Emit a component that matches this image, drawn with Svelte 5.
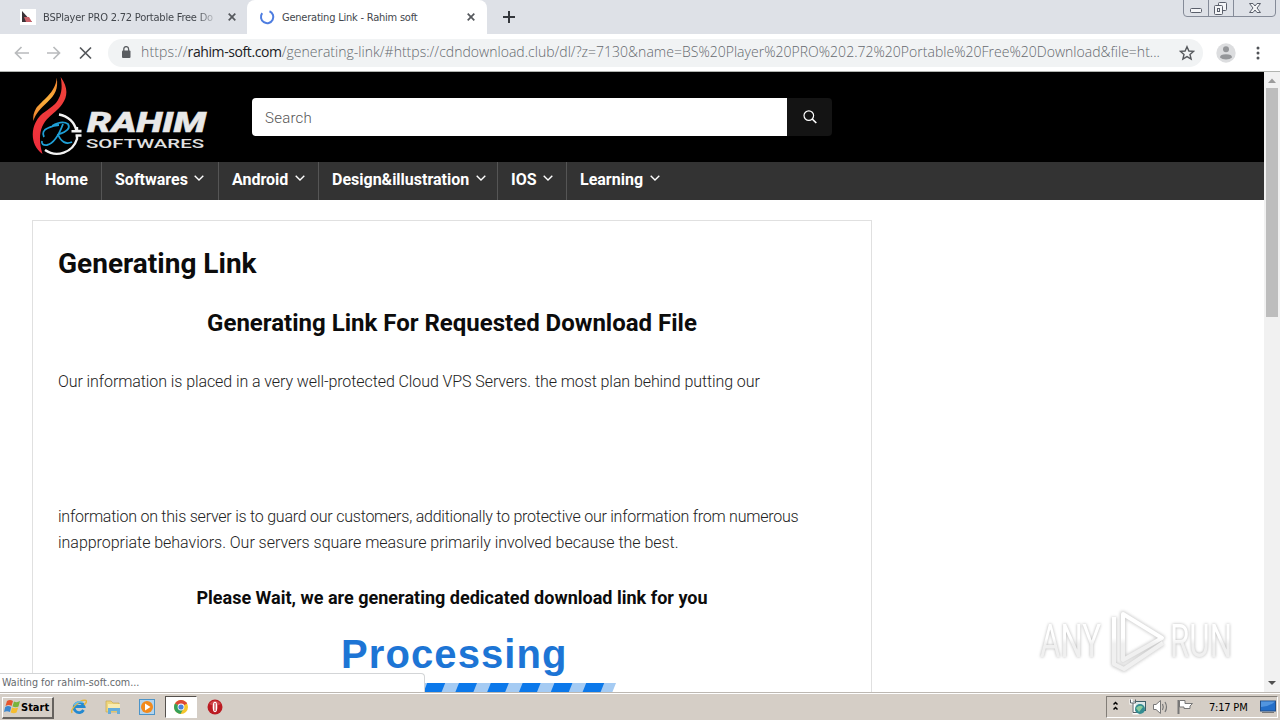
<script lang="ts">
  type NavItem = { label: string; width: number; menu: boolean };

  const nav: NavItem[] = [
    { label: 'Home', width: 70, menu: false },
    { label: 'Softwares', width: 117, menu: true },
    { label: 'Android', width: 100, menu: true },
    { label: 'Design&illustration', width: 179, menu: true },
    { label: 'IOS', width: 69, menu: true },
    { label: 'Learning', width: 110, menu: true },
  ];

  const stripes = [0, 1, 2, 3, 4, 5, 6, 7, 8, 9];

  let query = $state('');
</script>

<div class="screen">
  <div class="tabstrip">
    <div class="tab">
      <svg class="favicon" width="16" height="16" viewBox="0 0 16 16">
        <rect width="16" height="16" fill="#fff" />
        <path d="M2 2 L12 13 H2 Z" fill="#3b3337" />
        <path d="M4 8 L9 8 L12 13 H6 Z" fill="#c9626a" />
      </svg>
      <span class="title faded">BSPlayer PRO 2.72 Portable Free Do</span>
      <svg class="close" width="8" height="8" viewBox="0 0 8 8"><path d="M.7 .7 L7.3 7.3 M7.3 .7 L.7 7.3" /></svg>
    </div>
    <div class="tab active">
      <svg class="favicon" width="16" height="16" viewBox="0 0 16 16">
        <path d="M10.5 2.2 A6.2 6.2 0 1 1 3.2 4.2" fill="none" stroke="#4e7de0" stroke-width="2" />
      </svg>
      <span class="title">Generating Link - Rahim soft</span>
      <svg class="close" width="8" height="8" viewBox="0 0 8 8"><path d="M.7 .7 L7.3 7.3 M7.3 .7 L.7 7.3" /></svg>
    </div>
    <svg class="plus" width="12" height="12" viewBox="0 0 12 12"><path d="M6 0 V12 M0 6 H12" stroke="#34373c" stroke-width="2" /></svg>
    <svg class="window-buttons" width="94" height="17" viewBox="0 0 94 17">
      <g fill="none" stroke="#858b98">
        <path d="M.5 0 V13 Q.5 16.5 4 16.5 H89 Q92.500 16.500 92.500 13 V0 M25.500 0 V16 M50.500 0 V16" />
        <g stroke="#5a5f6b" fill="#f4f5f7">
          <rect x="7.500" y="8.500" width="11" height="4" rx="1" />
          <rect x="35.500" y="2.500" width="8" height="8" rx="1" />
          <rect x="31.500" y="5.500" width="8" height="9" rx="1" />
          <rect x="34.500" y="8.500" width="2" height="3" />
          <path d="M66.500 3.500 H70 L72 6 L74 3.500 H77.500 L74 8 L77.500 12.500 H74 L72 10 L70 12.500 H66.500 L70 8 Z" />
        </g>
      </g>
    </svg>
  </div>

  <div class="toolbar">
    <svg class="nav-icons" width="80" height="14" viewBox="0 0 80 14" fill="none" stroke-width="1.700">
      <path d="M15 7 H2 M7.500 1 L1.500 7 L7.500 13" stroke="#b9bbbd" />
      <path d="M33 7 H45 M39.500 1 L45.500 7 L39.500 13" stroke="#b9bbbd" />
      <path d="M66 1.500 L77 12.500 M77 1.500 L66 12.500" stroke="#55585c" />
    </svg>
    <div class="omnibox">
      <svg width="10" height="13" viewBox="0 0 10 13">
        <rect x="1" y="4.500" width="8.500" height="7.500" rx="1" fill="#5a5d61" />
        <path d="M2.800 5 V3 a2.400 2.400 0 0 1 4.800 0 V5" fill="none" stroke="#5a5d61" stroke-width="1.300" />
      </svg>
      <span class="url"><span class="scheme">https://</span><span class="host">rahim-soft.com</span><span class="path">/generating-link/#https://cdndownload.club/dl/?z=7130&amp;name=BS%20Player%20PRO%202.72%20Portable%20Free%20Download&amp;file=ht...</span></span>
      <svg width="16" height="16" viewBox="0 0 16 16">
        <path d="M8 1.700 L9.900 6 L14.500 6.400 L11 9.500 L12.100 14 L8 11.600 L3.900 14 L5 9.500 L1.500 6.400 L6.100 6 Z" fill="none" stroke="#55585c" stroke-width="1.400" />
      </svg>
    </div>
    <svg class="avatar" width="20" height="20" viewBox="0 0 20 20">
      <circle cx="10" cy="10" r="9.700" fill="#dcdddf" />
      <circle cx="10" cy="6.200" r="3" fill="#949699" />
      <path d="M4 14.500 Q4 11.200 10 11.200 T16 14.500 Q14 16.600 10 16.600 T4 14.500" fill="#949699" />
    </svg>
    <svg class="dots" width="4" height="14" viewBox="0 0 4 14" fill="#505357">
      <circle cx="2" cy="2" r="1.500" /><circle cx="2" cy="7" r="1.500" /><circle cx="2" cy="12" r="1.500" />
    </svg>
  </div>

  <div class="viewport">
    <div class="site">
      <header>
        <svg class="logo" width="180" height="84" viewBox="0 0 180 84">
          <defs>
            <linearGradient id="flame" x1="0" y1="0" x2="0" y2="1">
              <stop offset="0" stop-color="#f0453a" /><stop offset="1" stop-color="#ee2b3c" />
            </linearGradient>
            <linearGradient id="gold" x1="0" y1="0" x2="0" y2="1">
              <stop offset="0" stop-color="#ef7a2c" /><stop offset=".5" stop-color="#fbb03b" /><stop offset="1" stop-color="#ef7a2c" />
            </linearGradient>
          </defs>
          <path d="M27 37.500 A21 21 0 0 1 44.500 54 H49.500 M45 54 V50 M39.500 54.300 H49.500 M43.500 58.500 H49.500 M45 58 V62 A21 21 0 0 1 13 73" fill="none" stroke="#f2f2f2" stroke-width="2.400" />
          <path d="M24.700 .5 C26.500 12 23 18 15.300 25.300 C8 32 3.500 37 1.300 44 C1 39 1.500 36 4 31.500 C9 24 24 16 24.700 .5 Z" fill="url(#gold)" />
          <path d="M28.700 0 C36 10 36 19 30.300 27 C26 33 20 37 17 40.300 C8 48 5.500 61 10.500 77 C-1 69 -1 54 3.700 45.300 C9 35 16 34 23 27 C29 20 31 12 28.700 0 Z" fill="url(#flame)" />
          <path d="M20 49 Q30 43 36 47 Q40 53 26 57.500 Q31 69 40 65 M31 47 Q24 66 15 68 Q9 68.500 10 64 M12 60 Q9 54 16 51 Q22 48 27 48" fill="none" stroke="#1e9fd6" stroke-width="1.800" />
          <text class="brand" x="55" y="55.300" textLength="119" lengthAdjust="spacingAndGlyphs">RAHIM</text>
          <text class="brand-sub" x="54" y="71" textLength="118" lengthAdjust="spacingAndGlyphs">SOFTWARES</text>
        </svg>
        <form class="search" onsubmit={(e) => e.preventDefault()}>
          <input type="text" placeholder="Search" bind:value={query} />
          <button type="submit" aria-label="Search">
            <svg width="14" height="14" viewBox="0 0 14 14" fill="none" stroke="#fff">
              <circle cx="5.800" cy="5.600" r="4.800" stroke-width="1.200" /><path d="M9.200 9 L13.300 13" stroke-width="1.700" />
            </svg>
          </button>
        </form>
      </header>

      <nav>
        {#each nav as item}
          <div class="nav-item" style="width: {item.width}px">
            <span>{item.label}</span>
            {#if item.menu}
              <svg width="10" height="6" viewBox="0 0 10 6"><path d="M.7 .7 L5 4.900 L9.300 .7" fill="none" stroke="#fff" stroke-width="1.400" /></svg>
            {/if}
          </div>
        {/each}
      </nav>

      <main>
        <h1>Generating Link</h1>
        <h2>Generating Link For Requested Download File</h2>
        <p class="first">Our information is placed in a very well-protected Cloud VPS Servers. the most plan behind putting our</p>
        <p class="second">information on this server is to guard our customers, additionally to protective our information from numerous</p>
        <p class="third">inappropriate behaviors. Our servers square measure primarily involved because the best.</p>
        <h3>Please Wait, we are generating dedicated download link for you</h3>
        <div class="processing">Processing</div>
        <svg class="progress" width="330" height="20" viewBox="0 0 330 20">
          <path d="M6 0 H330 L322 20 H0 Z" fill="#a5cbf3" />
          {#each stripes as i}
            <path d="M{14 + i * 31.8} 0 h18 l-8 20 h-18 Z" fill="#0b78ea" />
          {/each}
        </svg>
      </main>
    </div>

    <div class="scrollbar">
      <svg width="16" height="16" viewBox="0 0 16 16"><path d="M4 11 L8 6.500 L12 11 Z" fill="#9c9c9c" /></svg>
      <div class="thumb"></div>
      <svg class="down" width="16" height="16" viewBox="0 0 16 16"><path d="M4 5 H12 L8 9 Z" fill="#505050" /></svg>
    </div>

    <div class="status">Waiting for rahim-soft.com...</div>

    <svg class="watermark" width="210" height="76" viewBox="0 0 210 76">
      <defs>
        <linearGradient id="frost" gradientUnits="userSpaceOnUse" x1="0" y1="34" x2="0" y2="40">
          <stop offset="0" stop-color="#fff" /><stop offset="1" stop-color="#f0f0f0" />
        </linearGradient>
      </defs>
      <path class="mark-shadow" d="M91 10 L130 34 L91 56 Z M82 13 V60 L92 65 L131 39" />
      <path class="mark" d="M91 10 L130 34 L91 56 Z M82 13 V60 L92 65 L131 39" />
      <text x="8" y="53" textLength="61" lengthAdjust="spacingAndGlyphs">ANY</text>
      <text x="138" y="53" textLength="62" lengthAdjust="spacingAndGlyphs">RUN</text>
    </svg>
  </div>

  <footer class="taskbar">
    <button class="start">
      <svg width="17" height="16" viewBox="0 0 17 16">
        <path d="M3 2 Q6 0 9 2 L7.500 7 Q5 5 1.500 7 Z" fill="#e6552e" />
        <path d="M10 2.500 Q13 4 16 2 L14.500 7.500 Q12 9 8.500 7.500 Z" fill="#79b43c" />
        <path d="M1.200 8 Q4 6 7.200 8 L6 13 Q3 11.500 0 13 Z" fill="#3c87cf" />
        <path d="M8 8.500 Q11 10 14.200 8.500 L12.500 13.500 Q10 15 6.700 13.500 Z" fill="#f6bd2f" />
      </svg>
      Start
    </button>
    <div class="launchers">
      <div class="slot">
        <svg width="16" height="16" viewBox="0 0 16 16">
          <path d="M12.500 11 A5 5 0 1 1 13 7.500 H4.500" fill="none" stroke="#2389d0" stroke-width="2.800" />
          <path d="M1 14 C-1 10 9 0 15 1.500 Q16.500 3 13 6" fill="none" stroke="#e6b63b" stroke-width="1.400" />
          <path d="M3 6 Q7 1 12 3.500" fill="none" stroke="#68bdea" stroke-width="1.500" />
        </svg>
      </div>
      <div class="slot">
        <svg width="16" height="16" viewBox="0 0 16 16">
          <path d="M1 2 H6 L8 4 H14 V13 H1 Z" fill="#eed67d" stroke="#c9aa50" stroke-width=".7" />
          <path d="M3 5 H15 V10 H3 Z" fill="#f8ecb0" />
          <path d="M3 15 V9 H15 V15 H12 V12 H6 V15 Z" fill="#65addb" />
        </svg>
      </div>
      <div class="slot">
        <svg width="16" height="16" viewBox="0 0 16 16">
          <rect x=".5" y=".5" width="15" height="15" fill="#b3d4ed" stroke="#4c94c8" />
          <circle cx="8" cy="8" r="6" fill="#f28a1c" /><path d="M6 4.500 L11.500 8 L6 11.500 Z" fill="#fff" />
        </svg>
      </div>
      <div class="slot pressed">
        <svg width="14" height="14" viewBox="0 0 14 14">
          <circle cx="7" cy="7" r="7" fill="#f5c62d" />
          <path d="M7 7 L1 3.500 A7 7 0 0 1 13 3.500 Z" fill="#dc4937" />
          <path d="M7 7 L1 3.500 A7 7 0 0 0 6.500 14 L9.500 8.500 Z" fill="#36a059" />
          <path d="M7 3.500 H13 L12 2 H4 Z" fill="#dc4937" />
          <circle cx="7" cy="7" r="3.400" fill="#fff" /><circle cx="7" cy="7" r="2.600" fill="#4a82dc" />
        </svg>
      </div>
      <div class="slot">
        <svg width="16" height="16" viewBox="0 0 16 16">
          <circle cx="8" cy="8" r="7.500" fill="#bb1b22" /><path d="M2 5 Q8 -2 14 5 Q8 8 2 5" fill="#dc6467" opacity=".6" />
          <ellipse cx="8" cy="8" rx="2.300" ry="5.200" fill="#fff" /><path d="M8 4 V12" stroke="#c63a40" stroke-width="1.200" />
        </svg>
      </div>
    </div>
    <div class="tray">
      <svg width="80" height="18" viewBox="0 0 80 18">
        <path d="M.5 6.500 L2.500 4.500 L4.500 6.500 M.5 11.500 L2.500 9.500 L4.500 11.500" fill="none" stroke="#000" stroke-width="1.500" />
        <rect x="20.500" y="3.500" width="12" height="9" fill="#dce8e8" stroke="#3e5f69" />
        <path d="M18 1 V5 H21 V15 H26" fill="none" stroke="#fff" stroke-width="3" />
        <path d="M17.500 1.500 V5 H22.500 V1.500 M20 5 V14.500 H25" fill="none" stroke="#5b6267" />
        <circle cx="27" cy="11" r="5" fill="#338c91" /><path d="M23 10 Q27 6 30 9 L26 14 Z" fill="#8ccb9c" />
        <path d="M40.500 6.500 H43 L47.500 2.500 V15.500 L43 11.500 H40.500 Z" fill="#fff" stroke="#777" />
        <path d="M49.500 6 Q51 9 49.500 12 M52 4 Q55 9 52 14" fill="none" stroke="#777" stroke-width="1.200" />
        <path d="M65.500 2 V16" stroke="#777" stroke-width="2" />
        <path d="M66.500 2.500 H72 V5.500 H79.500 L77 8 V10.500 H71 V9 H66.500 Z" fill="#fff" stroke="#777" />
      </svg>
      <span class="clock">7:17 PM</span>
      <svg width="16" height="14" viewBox="0 0 16 14">
        <rect x=".5" y="1" width="15" height="10" fill="#246fc9" stroke="#234e86" /><path d="M1 7 Q9 7 15 1.500 V1.500 H1 Z" fill="#5295df" />
        <path d="M2 12.500 H14" stroke="#777" />
      </svg>
    </div>
  </footer>
</div>

<style>
  :global(body) {
    overflow: hidden;
  }

  .screen {
    width: 1280px;
    height: 720px;
    display: flex;
    flex-direction: column;
    overflow: hidden;
    background: #fff;
    color: #0c0c0c;
    font-family: Roboto, sans-serif;
  }

  svg {
    display: block;
    flex: none;
  }

  .tabstrip {
    height: 34px;
    flex: none;
    display: flex;
    background: #dee1e7;
  }

  .tab {
    width: 240px;
    box-sizing: border-box;
    display: flex;
    align-items: center;
    padding: 0 12px 0 12px;
    font: 11px 'DejaVu Sans Condensed', 'DejaVu Sans', sans-serif;
    color: #43474d;
  }

  .tab:first-child {
    width: 247px;
    padding-left: 20px;
    padding-right: 11px;
  }

  .tab.active {
    background: #fff;
    border-radius: 8px 8px 0 0;
  }

  .title {
    width: 175px;
    margin-left: 7px;
    white-space: nowrap;
    overflow: hidden;
    letter-spacing: -0.22px;
  }

  .tab.active .title {
    width: 180px;
  }

  .faded {
    mask-image: linear-gradient(90deg, #000 88%, transparent);
  }

  .close {
    margin-left: auto;
    margin-right: 0;
    fill: none;
    stroke: #55585d;
    stroke-width: 1.700;
  }

  .plus {
    margin: 11px 0 0 16px;
  }

  .window-buttons {
    margin-left: auto;
    margin-right: 3px;
  }

  .toolbar {
    height: 38px;
    box-sizing: border-box;
    flex: none;
    display: flex;
    align-items: center;
    padding: 0 20px 0 14px;
    border-bottom: 1px solid #b1b4b0;
  }

  .omnibox {
    width: 1095px;
    height: 28px;
    box-sizing: border-box;
    margin-left: 14px;
    padding: 0 8px 0 13px;
    display: flex;
    align-items: center;
    border-radius: 14px;
    background: #f1f3f4;
  }

  .url {
    flex: 1;
    margin-left: 10px;
    display: flex;
    white-space: nowrap;
    font: 300 14px/18px 'Open Sans', sans-serif;
    margin-top: -2px;
    color: #65696e;
  }

  .scheme {
    letter-spacing: 0.15px;
  }

  .host {
    color: #202124;
    font-weight: 400;
    letter-spacing: -0.4px;
  }

  .path {
    letter-spacing: 0.02px;
  }

  .avatar {
    margin: 0 20px 0 13px;
  }

  .dots {
    margin-top: 1px;
  }

  .viewport {
    position: relative;
    height: 620px;
    display: flex;
    overflow: hidden;
  }

  .site {
    flex: 1;
  }

  header {
    height: 90px;
    display: flex;
    background: #000;
  }

  .logo {
    margin: 5px 0 0 32px;
  }

  .brand {
    font: italic 900 28px Roboto, sans-serif;
    fill: #e8e8e8;
    stroke: #e8e8e8;
    stroke-width: 0.4px;
  }

  .brand-sub {
    font: 500 12.500px Roboto, sans-serif;
    fill: #e0e0e0;
  }

  .search {
    width: 580px;
    height: 38px;
    margin: 26px 0 0 40px;
    display: flex;
    border-radius: 4px;
    overflow: hidden;
  }

  .search input {
    width: 535px;
    box-sizing: border-box;
    border: 0;
    padding: 2px 13px 0;
    background: #fff;
    font: 300 15px Roboto, sans-serif;
    letter-spacing: 0.25px;
  }

  .search input::placeholder {
    color: #555;
  }

  .search button {
    width: 45px;
    border: 0;
    padding: 0;
    display: grid;
    place-items: center;
    background: #141414;
  }

  nav {
    height: 38px;
    display: flex;
    padding-left: 32px;
    background: #333;
  }

  .nav-item {
    box-sizing: border-box;
    display: flex;
    padding: 8px 0 0 13px;
    border-right: 1px solid #555;
    color: #fff;
    font-size: 16px;
    font-weight: 700;
    line-height: 19px;
    white-space: nowrap;
  }

  .nav-item:last-child {
    border: 0;
  }

  .nav-item svg {
    margin: 5px 0 0 6.500px;
  }

  main {
    width: 840px;
    height: 520px;
    box-sizing: border-box;
    margin: 20px 0 0 32px;
    padding: 26px 25px 0;
    border: 1px solid #e0e0e0;
  }

  h1,
  h2,
  h3,
  p {
    margin: 0;
    white-space: nowrap;
  }

  h1 {
    font-size: 28px;
    line-height: 34px;
    font-weight: 700;
  }

  h2 {
    margin-top: 26px;
    font-size: 24px;
    line-height: 32px;
    font-weight: 700;
    text-align: center;
  }

  p {
    font-size: 16px;
    line-height: 26px;
    font-weight: 300;
    color: #222;
  }

  .first {
    margin: 30px 0 109px;
    letter-spacing: -0.085px;
  }

  .second {
    letter-spacing: -0.235px;
  }

  .third {
    letter-spacing: -0.03px;
  }

  h3 {
    margin-top: 30px;
    font-size: 18px;
    line-height: 24px;
    font-weight: 700;
    text-align: center;
    letter-spacing: 0.01px;
  }

  .processing {
    margin: 21px 0 0 283px;
    font: 700 40px/46px 'Liberation Sans', sans-serif;
    letter-spacing: 1.100px;
    color: #1d75d5;
  }

  .progress {
    margin: 6px 0 0 228px;
  }

  .scrollbar {
    width: 16px;
    display: flex;
    flex-direction: column;
    background: #f1f1f1;
  }

  .thumb {
    width: 12px;
    height: 229px;
    margin: 0 2px;
    background: #bdbdbd;
  }

  .down {
    margin-top: auto;
  }

  .status {
    position: absolute;
    left: 0;
    bottom: 0;
    width: 425px;
    height: 19px;
    box-sizing: border-box;
    padding-left: 2px;
    border: solid #d3d5d7;
    border-width: 1px 1px 0 0;
    border-radius: 0 4px 0 0;
    background: #fff;
    color: #666a6e;
    font: 10.700px/18px 'DejaVu Sans Condensed', 'DejaVu Sans', sans-serif;
  }

  .watermark {
    position: absolute;
    left: 1032px;
    top: 532px;
    overflow: visible;
  }

  .watermark text {
    font: 400 46px Roboto, sans-serif;
    fill: url(#frost);
    filter: drop-shadow(0 0 1.500px #b5b5b5);
  }

  .mark-shadow {
    fill: none;
    stroke: #cfcfcf;
    stroke-width: 6px;
    stroke-linejoin: round;
    filter: blur(1.500px);
  }

  .mark {
    fill: none;
    stroke: url(#frost);
    stroke-width: 4px;
    stroke-linejoin: round;
  }

  .taskbar {
    height: 28px;
    box-sizing: border-box;
    flex: none;
    display: flex;
    align-items: center;
    border-top: 1px solid #bdb8b2;
    box-shadow: inset 0 1px #fff;
    background: #d5cec6;
    font-family: 'DejaVu Sans Condensed', 'DejaVu Sans', sans-serif;
  }

  .start {
    width: 52px;
    height: 22px;
    box-sizing: border-box;
    margin: 2px 0 0 2px;
    padding: 0 0 0 1px;
    display: flex;
    align-items: center;
    border: solid;
    border-width: 1px 2px 2px 1px;
    border-color: #fff #66625e #66625e #fff;
    background: #d5cec6;
    color: #000;
    font: 700 11px 'DejaVu Sans Condensed', 'DejaVu Sans', sans-serif;
  }

  .launchers {
    display: flex;
    margin: 1px 0 0 9px;
    gap: 2px;
  }

  .slot {
    width: 32px;
    height: 22px;
    box-sizing: border-box;
    display: grid;
    place-items: center;
  }

  .pressed {
    border: 1px solid;
    border-color: #55514d #fff #fff #55514d;
    background: #fff;
  }

  .tray {
    width: 172px;
    height: 22px;
    box-sizing: border-box;
    margin: 1px 2px 0 auto;
    padding: 0 0 0 6px;
    display: flex;
    align-items: center;
    border: 1px solid;
    border-color: #827d77 #fff #fff #827d77;
    color: #000;
    font-size: 11px;
  }

  .clock {
    width: 51px;
    margin-left: 16px;
    white-space: nowrap;
    letter-spacing: -0.2px;
  }
</style>
